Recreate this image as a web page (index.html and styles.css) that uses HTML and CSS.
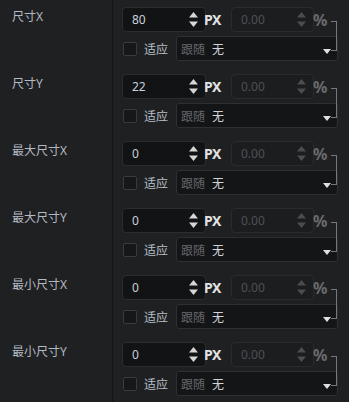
FILE: index.html
```html
<!DOCTYPE html>
<html>
<head>
    <title>Size Properties</title>
    <link rel="stylesheet" href="styles.css">
</head>
<body>
    <div class="panel" id="panel"></div>

    <script>
        const rows = [
            { label: "尺寸X", value: "80" },
            { label: "尺寸Y", value: "22" },
            { label: "最大尺寸X", value: "0" },
            { label: "最大尺寸Y", value: "0" },
            { label: "最小尺寸X", value: "0" },
            { label: "最小尺寸Y", value: "0" }
        ];

        const spinner = `
            <svg class="spin" width="9" height="15" viewBox="0 0 9 15">
                <polygon points="4.5,0 9,5.5 0,5.5" />
                <polygon points="0,9.5 9,9.5 4.5,15" />
            </svg>`;

        const panel = document.getElementById("panel");
        panel.innerHTML = rows.map(r => `
            <div class="row">
                <div class="label">${r.label}</div>
                <div class="controls">
                    <div class="line">
                        <div class="num">
                            <span class="val">${r.value}</span>
                            ${spinner}
                        </div>
                        <span class="unit">PX</span>
                        <div class="num disabled">
                            <span class="val">0.00</span>
                            ${spinner}
                        </div>
                        <span class="unit dim">%</span>
                    </div>
                    <div class="line second">
                        <span class="check"></span>
                        <span class="fit">适应</span>
                        <div class="select">
                            <span class="follow">跟随</span>
                            <span class="choice">无</span>
                            <svg class="caret" width="8" height="5" viewBox="0 0 8 5">
                                <polygon points="0,0 8,0 4,5" />
                            </svg>
                        </div>
                    </div>
                    <div class="link"></div>
                </div>
            </div>`).join("");
    </script>
</body>
</html>
```

FILE: styles.css
```css
body {
    margin: 0;
    background-color: #1f2022;
    font-family: "Noto Sans", "Noto Sans CJK SC", sans-serif;
    font-size: 12px;
    color: #c8ced6;
}

.panel {
    width: 349px;
}

.row {
    display: flex;
    height: 67px;
}

.label {
    width: 113px;
    border-right: 1px solid #141516;
    padding: 8px 0 0 12px;
    box-sizing: border-box;
    color: #b4bac2;
    line-height: 17px;
}

.controls {
    position: relative;
    flex: 1;
    padding: 7px 0 0 9px;
}

.line {
    display: flex;
    align-items: center;
    height: 25px;
}

.line.second {
    margin-top: 4px;
}

.num {
    display: flex;
    align-items: center;
    width: 84px;
    height: 25px;
    flex-shrink: 0;
    box-sizing: border-box;
    border: 1px solid #2c2d30;
    border-radius: 4px;
    background-color: #121315;
    padding: 0 7px 0 9px;
}

.num .val {
    flex: 1;
    color: #c8d0da;
}

.spin {
    fill: #d6d6d6;
}

.num.disabled {
    background-color: #1c1d1f;
    border-color: #2a2b2e;
    margin-left: 11px;
    width: 83px;
}

.num.disabled .val {
    color: #4e5054;
}

.num.disabled .spin {
    fill: #4c4d50;
}

.unit {
    width: 16px;
    flex-shrink: 0;
    white-space: nowrap;
    font-weight: bold;
    font-size: 14px;
    letter-spacing: -0.5px;
    color: #e2e2e2;
    margin-left: -2px;
}

.unit.dim {
    font-size: 16px;
    color: #6a6b6e;
    margin-left: -1px;
}

.check {
    width: 14px;
    height: 14px;
    box-sizing: border-box;
    border: 1px solid #3a3b3e;
    border-radius: 2px;
    background-color: #161719;
    margin-left: 1px;
}

.fit {
    margin-left: 7px;
    color: #b8c0ca;
}

.select {
    display: flex;
    align-items: center;
    width: 162px;
    height: 25px;
    box-sizing: border-box;
    margin-left: 8px;
    border: 1px solid #2e2f32;
    border-radius: 3px;
    background-color: #141517;
    padding: 0 6px 0 4px;
}

.follow {
    color: #64666a;
}

.choice {
    margin-left: 7px;
    flex: 1;
    color: #d0d4da;
}

.caret {
    fill: #e0e0e0;
    margin-top: 5px;
}

/* bracket tying the percent box to the follow select */
.link {
    position: absolute;
    left: 218px;
    top: 21px;
    width: 5px;
    height: 28px;
    border: 1px solid #77787b;
    border-left: none;
}
```
